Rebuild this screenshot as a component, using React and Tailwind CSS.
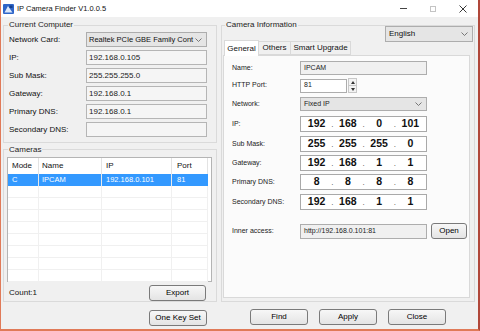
import React from "react";

const Chevron = ({ className = "" }) => (
  <svg width="7" height="4" viewBox="0 0 7 4" className={`flex-none ${className}`}>
    <polyline points="0.5,0.5 3.5,3.5 6.5,0.5" fill="none" stroke="#6a6a6a" strokeWidth="0.9" />
  </svg>
);

const Button = ({ children, className = "" }) => (
  <div
    className={`flex items-center justify-center rounded-[3px] border border-[#7a7a7a] bg-gradient-to-b from-[#f7f7f7] to-[#e4e4e4] text-[8px] text-black ${className}`}
  >
    {children}
  </div>
);

const LeftRow = ({ label, children }) => (
  <div className="flex h-[15px] items-center">
    <div className="w-[77px] text-[8px] text-[#111]">{label}</div>
    {children}
  </div>
);

const LeftInput = ({ value }) => (
  <div className="flex h-[15px] w-[121px] items-center border border-[#b5b5b5] bg-[#f5f5f5] pl-[2px] text-[8px] text-[#222]">
    {value}
  </div>
);

const IpBox = ({ parts }) => (
  <div className="flex h-[16px] w-[127px] border border-[#a9a9a9] bg-white">
    {parts.map((p, i) => (
      <React.Fragment key={i}>
        <div className="flex flex-1 items-center justify-center text-[10.5px] font-bold text-[#111]">{p}</div>
        {i < 3 && (
          <div className="flex w-0 items-end justify-center pb-[2px] text-[8px] leading-none text-[#444]">.</div>
        )}
      </React.Fragment>
    ))}
  </div>
);

const RightRow = ({ label, children, className = "" }) => (
  <div className={`flex items-center ${className}`}>
    <div className="w-[68px] text-[7px] text-[#222]">{label}</div>
    {children}
  </div>
);

const rows = Array.from({ length: 9 });

export default function App() {
  return (
    <div className="flex h-[331px] w-[480px] flex-col border-b-2 border-l border-r-2 border-b-[#e07a58] border-l-[#e07a58] border-r-[#b0473a] bg-white font-['Liberation_Sans',Arial,sans-serif]">
      {/* Title bar */}
      <div className="flex h-[17px] items-center bg-white">
        <svg width="11" height="10" viewBox="0 0 11 10" className="ml-[2px]">
          <rect x="0" y="0" width="11" height="10" rx="1" fill="#2f66c9" />
          <path d="M1.5 8.5 L5 2 L9.5 8.5 Z" fill="#dbe8fb" />
          <rect x="6.5" y="1.5" width="3" height="2.5" fill="#173f8a" />
        </svg>
        <span className="ml-[3px] text-[7.5px] text-[#111]">IP Camera Finder V1.0.0.5</span>
        <div className="ml-auto flex h-full">
          <div className="flex w-[30px] items-center justify-center">
            <div className="h-px w-[7px] bg-[#444]" />
          </div>
          <div className="flex w-[30px] items-center justify-center">
            <div className="h-[6px] w-[6px] border border-[#c4c4c4]" />
          </div>
          <div className="flex w-[30px] items-center justify-center">
            <svg width="8" height="8" viewBox="0 0 8 8">
              <path d="M0.5 0.5 L7.5 7.5 M7.5 0.5 L0.5 7.5" stroke="#222" strokeWidth="0.9" />
            </svg>
          </div>
        </div>
      </div>

      {/* Body */}
      <div className="flex flex-1 flex-col bg-[#f0f0f0] pl-[2px] pr-[3px] pt-[3px]">
        <div className="flex h-[282px] gap-[4px]">
          {/* Left column */}
          <div className="flex w-[214px] flex-col gap-[2px]">
            <fieldset className="h-[123px] border border-[#dadada]">
              <legend className="ml-[4px] px-[1px] text-[8px] leading-[10px] text-[#222]">Current Computer</legend>
              <div className="mt-[2px] flex flex-col gap-[3px] pl-[5px]">
                <LeftRow label="Network Card:">
                  <div className="flex h-[15px] w-[121px] items-center justify-between whitespace-nowrap border border-[#adadad] bg-[#e5e5e5] pl-[2px] pr-[4px] text-[7.5px] text-[#111]">
                    <span>Realtek PCIe GBE Family Cont</span>
                    <Chevron className="ml-[2px]" />
                  </div>
                </LeftRow>
                <LeftRow label="IP:">
                  <LeftInput value="192.168.0.105" />
                </LeftRow>
                <LeftRow label="Sub Mask:">
                  <LeftInput value="255.255.255.0" />
                </LeftRow>
                <LeftRow label="Gateway:">
                  <LeftInput value="192.168.0.1" />
                </LeftRow>
                <LeftRow label="Primary DNS:">
                  <LeftInput value="192.168.0.1" />
                </LeftRow>
                <LeftRow label="Secondary DNS:">
                  <LeftInput value="" />
                </LeftRow>
              </div>
            </fieldset>

            <fieldset className="h-[158px] border border-[#dadada]">
              <legend className="ml-[4px] px-[1px] text-[8px] leading-[10px] text-[#222]">Cameras</legend>
              <div className="pl-[3px] pr-[4px]">
                <div className="mt-[2px] h-[125px] w-[205px] border border-[#b4b4b4] bg-white">
                  <div className="flex h-[16px] text-[8px] text-[#111]">
                    <div className="flex w-[31px] items-center border-r border-[#e3e3e3] pl-[4px]">Mode</div>
                    <div className="flex w-[63px] items-center border-r border-[#e3e3e3] pl-[3px]">Name</div>
                    <div className="flex w-[70px] items-center border-r border-[#e3e3e3] pl-[4px]">IP</div>
                    <div className="flex w-[36px] items-center border-r border-[#e3e3e3] pl-[5px]">Port</div>
                  </div>
                  {rows.map((_, i) => (
                    <div key={i} className="flex h-[12px] text-[7.5px]">
                      {i === 0 ? (
                        <>
                          <div className="flex w-[31px] items-center border-r border-[#e8e8e8] bg-[#3399ff] pl-[4px] text-white">C</div>
                          <div className="flex w-[63px] items-center border-r border-[#e8e8e8] bg-[#3399ff] pl-[3px] text-white">IPCAM</div>
                          <div className="flex w-[70px] items-center border-r border-[#e8e8e8] bg-[#3399ff] pl-[4px] text-white">192.168.0.101</div>
                          <div className="flex w-[36px] items-center bg-[#3399ff] pl-[5px] text-white">81</div>
                        </>
                      ) : (
                        <>
                          <div className="w-[31px] border-b border-r border-[#f0f0f0]" />
                          <div className="w-[63px] border-b border-r border-[#f0f0f0]" />
                          <div className="w-[70px] border-b border-r border-[#f0f0f0]" />
                          <div className="w-[36px] border-b border-r border-[#f0f0f0]" />
                        </>
                      )}
                    </div>
                  ))}
                </div>
                <div className="mt-[3px] flex items-center justify-between pr-[6px]">
                  <span className="ml-[2px] text-[8px] text-[#111]">Count:1</span>
                  <Button className="h-[16px] w-[57px]">Export</Button>
                </div>
              </div>
            </fieldset>
          </div>

          {/* Right column */}
          <fieldset className="relative h-[282px] w-[254px] border border-[#dadada]">
            <legend className="ml-[3px] px-[1px] text-[8px] leading-[10px] text-[#222]">Camera Information</legend>
            <div className="absolute right-[1px] top-[-4px] flex h-[16px] w-[88px] items-center justify-between border border-[#adadad] bg-[#e5e5e5] pl-[3px] pr-[4px] text-[8px] text-[#111]">
              <span>English</span>
              <Chevron />
            </div>
            <div className="pl-[1px] pr-[4px]">
              <div className="mt-[10px] flex items-end pl-[1px] text-[8px] text-[#111]">
                <div className="relative z-10 -mb-px flex h-[16px] w-[35px] items-center justify-center border border-b-0 border-[#d9d9d9] bg-white">
                  General
                </div>
                <div className="flex h-[14px] w-[32px] items-center justify-center border border-l-0 border-[#d9d9d9] bg-[#f0f0f0]">
                  Others
                </div>
                <div className="flex h-[14px] w-[60px] items-center justify-center border border-l-0 border-[#d9d9d9] bg-[#f0f0f0]">
                  Smart Upgrade
                </div>
              </div>
              <div className="flex h-[243px] flex-col border border-[#d9d9d9] bg-[#fbfbfb] pl-[8px]">
                <RightRow label="Name:" className="mt-[5px]">
                  <div className="flex h-[14px] w-[127px] items-center border border-[#adadad] bg-[#f0f0f0] pl-[3px] text-[7px] text-[#222]">
                    IPCAM
                  </div>
                </RightRow>
                <RightRow label="HTTP Port:" className="mt-[3px]">
                  <div className="flex h-[14px] w-[47px] items-center border border-[#adadad] bg-white pl-[3px] text-[7px] text-[#222]">
                    81
                  </div>
                  <div className="ml-[1px] flex h-[15px] w-[9px] flex-col">
                    <div className="flex flex-1 items-center justify-center border border-[#c8c8c8] bg-[#f3f3f3]">
                      <svg width="4" height="3" viewBox="0 0 4 3"><path d="M0 3 L2 0 L4 3 Z" fill="#333" /></svg>
                    </div>
                    <div className="flex flex-1 items-center justify-center border border-t-0 border-[#c8c8c8] bg-[#f3f3f3]">
                      <svg width="4" height="3" viewBox="0 0 4 3"><path d="M0 0 L2 3 L4 0 Z" fill="#333" /></svg>
                    </div>
                  </div>
                </RightRow>
                <RightRow label="Network:" className="mt-[4px]">
                  <div className="flex h-[14px] w-[127px] items-center justify-between border border-[#adadad] bg-[#e5e5e5] pl-[3px] pr-[4px] text-[7px] text-[#222]">
                    <span>Fixed IP</span>
                    <Chevron />
                  </div>
                </RightRow>
                <RightRow label="IP:" className="mt-[5px]">
                  <IpBox parts={["192", "168", "0", "101"]} />
                </RightRow>
                <RightRow label="Sub Mask:" className="mt-[4px]">
                  <IpBox parts={["255", "255", "255", "0"]} />
                </RightRow>
                <RightRow label="Gateway:" className="mt-[3px]">
                  <IpBox parts={["192", "168", "1", "1"]} />
                </RightRow>
                <RightRow label="Primary DNS:" className="mt-[3px]">
                  <IpBox parts={["8", "8", "8", "8"]} />
                </RightRow>
                <RightRow label="Secondary DNS:" className="mt-[4px]">
                  <IpBox parts={["192", "168", "1", "1"]} />
                </RightRow>
                <RightRow label="Inner access:" className="mt-[13px]">
                  <div className="h-[15px] w-[127px] border border-[#adadad] bg-[#f0f0f0] pl-[3px] pt-px text-[7px] text-[#222]">
                    http://192.168.0.101:81
                  </div>
                  <Button className="ml-[4px] h-[16px] w-[36px]">Open</Button>
                </RightRow>
              </div>
            </div>
          </fieldset>
        </div>

        {/* Bottom buttons */}
        <div className="mt-[7px] flex pl-[146px]">
          <Button className="mt-px h-[16px] w-[58px]">One Key Set</Button>
          <Button className="ml-[43px] h-[16px] w-[58px]">Find</Button>
          <Button className="ml-[11px] h-[16px] w-[58px]">Apply</Button>
          <Button className="ml-[11px] h-[16px] w-[58px]">Close</Button>
        </div>
      </div>
    </div>
  );
}
